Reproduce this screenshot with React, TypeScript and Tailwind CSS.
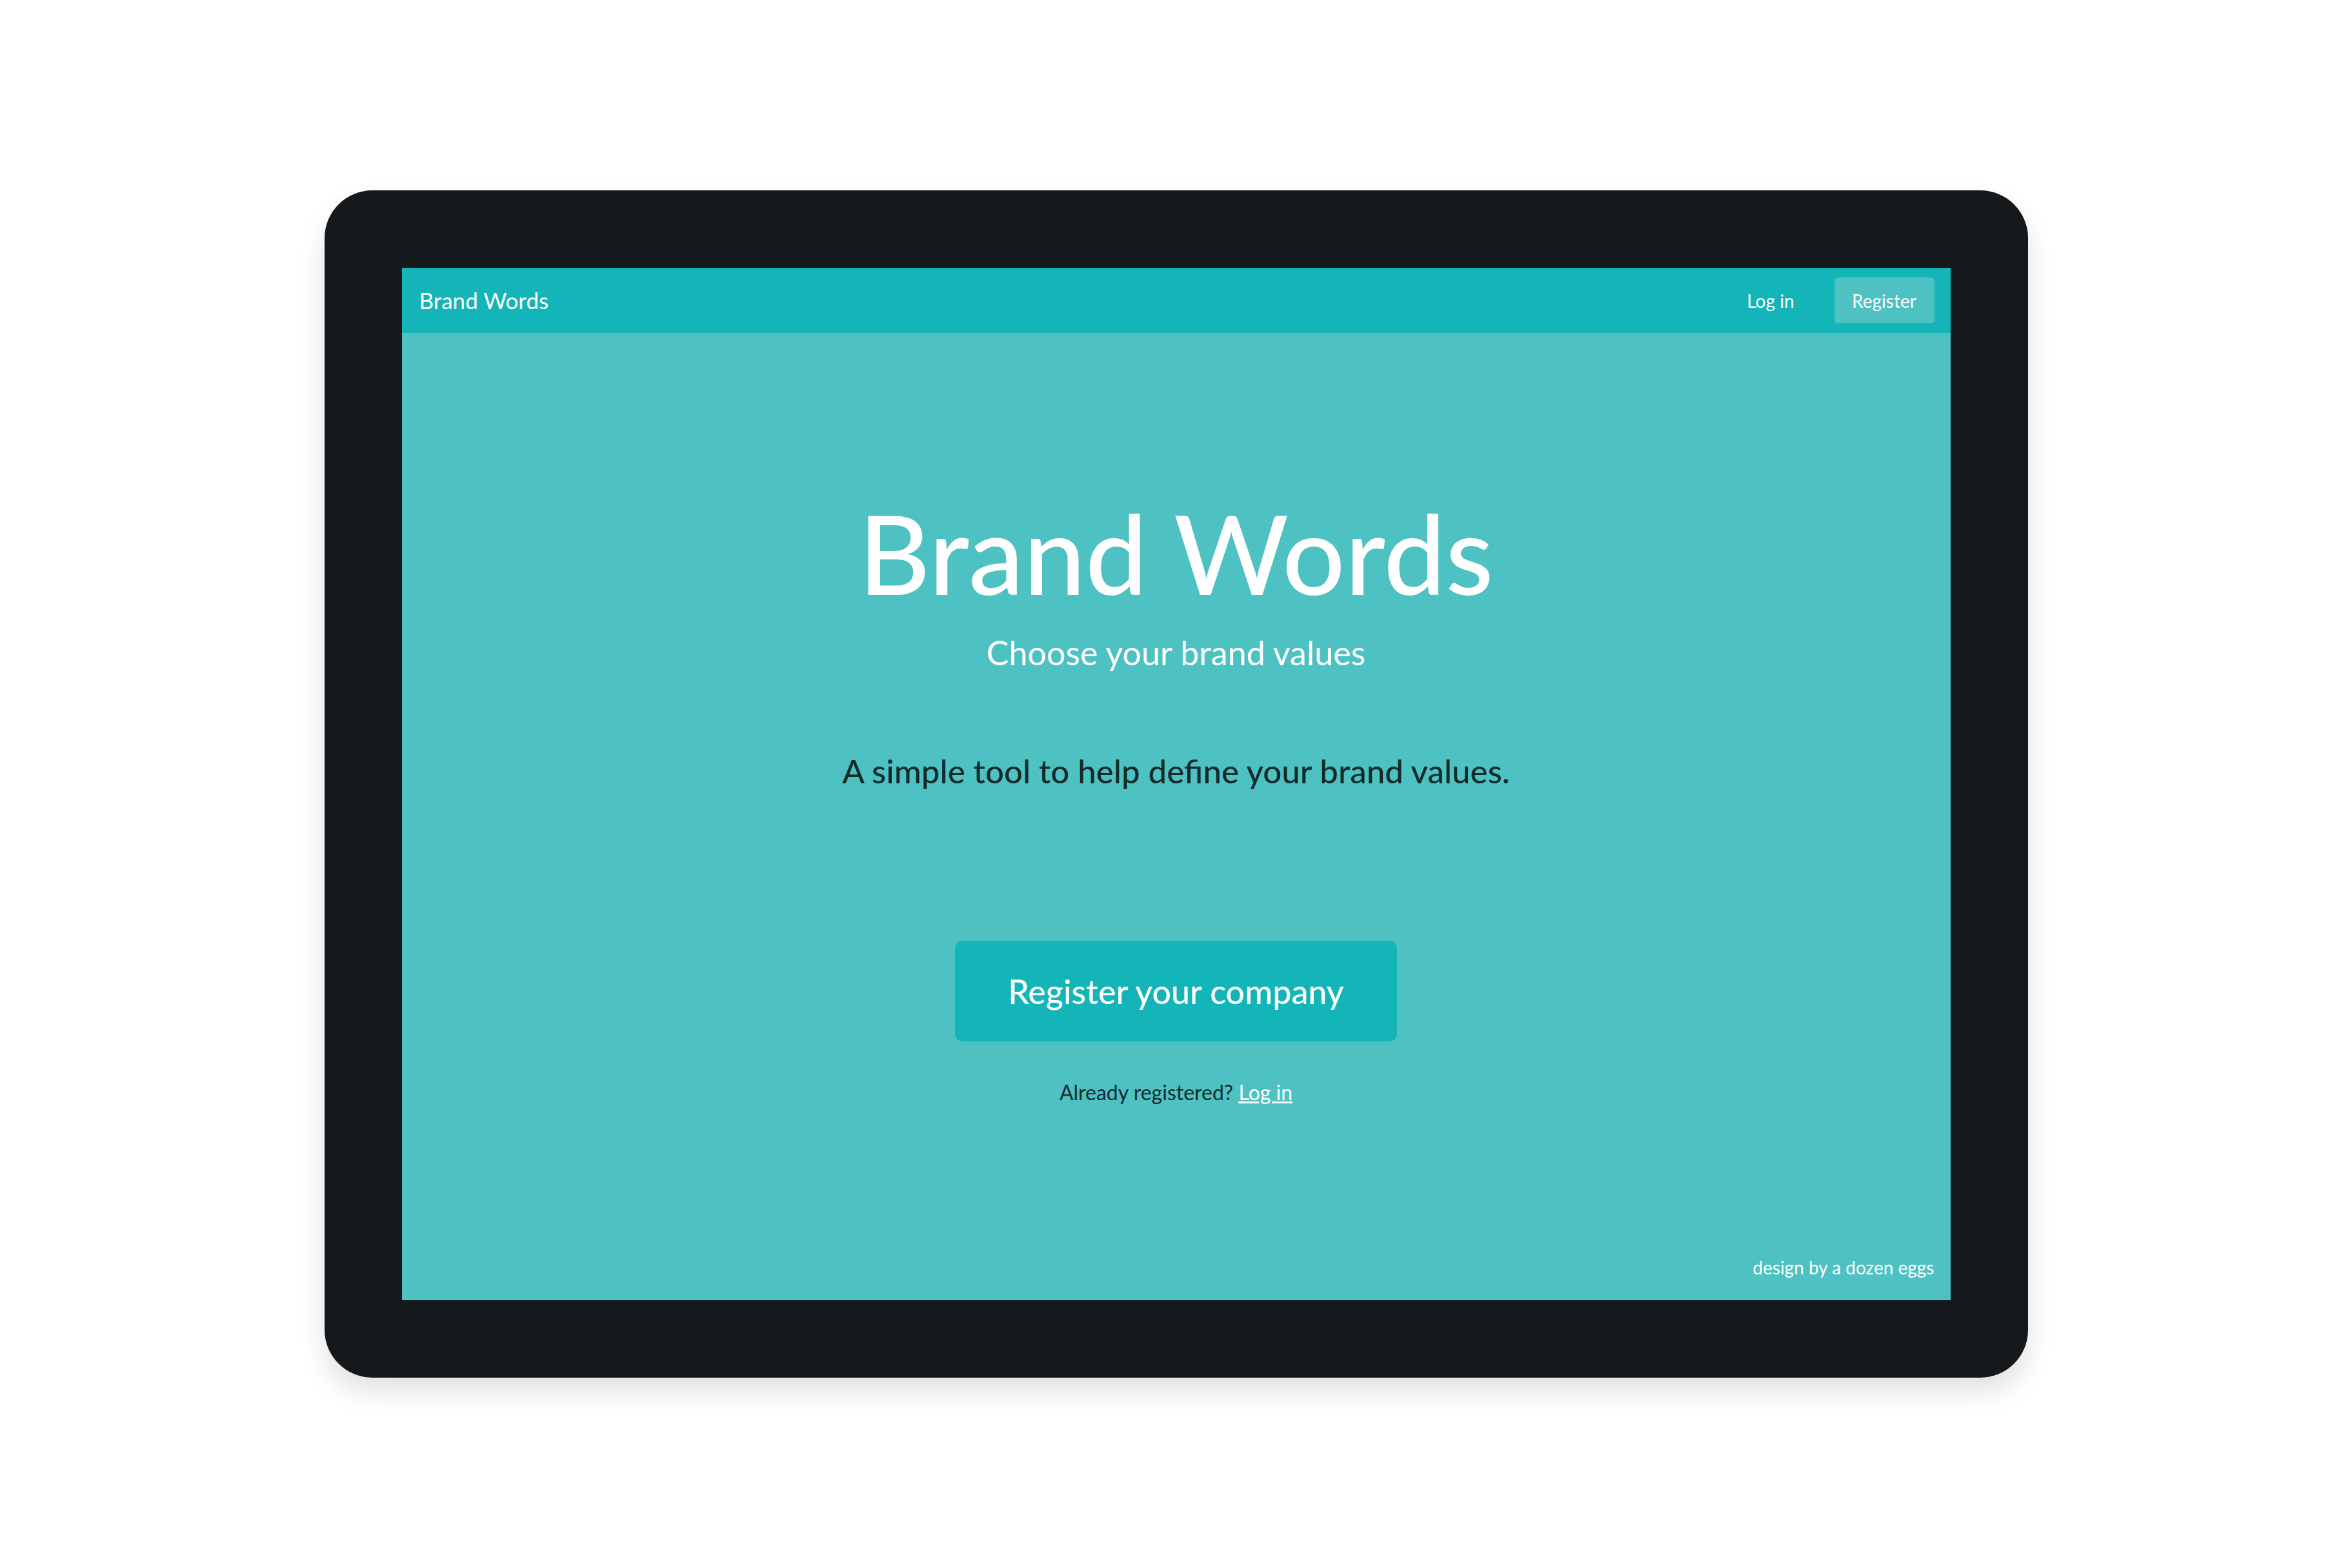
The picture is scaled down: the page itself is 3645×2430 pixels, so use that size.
import React from 'react';

const font = { fontFamily: 'Lato, "Noto Sans", sans-serif' };

const NavBar = () => (
  <header className="flex h-[101px] shrink-0 items-center justify-between bg-[#13b5b8] pl-[27px] pr-[25px]">
    <span className="text-[35px] text-white">Brand Words</span>
    <nav className="flex items-center gap-[62px]">
      <a className="text-[28px] text-white">Log in</a>
      <a className="flex h-[71px] w-[155px] items-center justify-center rounded-[6px] bg-[#4ec1c2] text-[28px] text-white">
        Register
      </a>
    </nav>
  </header>
);

const Hero = () => (
  <main className="relative flex flex-1 flex-col items-center bg-[#4ec1c2] pt-[254px]">
    <h1 className="text-[171px] font-medium leading-none text-white">Brand Words</h1>
    <p className="mt-[44px] text-[52px] leading-none text-white">Choose your brand values</p>
    <p className="mt-[132px] text-[51px] font-medium leading-none text-[#132a2b]">
      A simple tool to help define your brand values.
    </p>
    <button className="mt-[238px] flex h-[156px] w-[685px] items-center justify-center rounded-[12px] bg-[#13b5b8] text-[52px] font-medium text-white">
      Register your company
    </button>
    <p className="mt-[63px] text-[32px] leading-none text-[#132a2b]">
      Already registered? <a className="text-white underline">Log in</a>
    </p>
    <span className="absolute bottom-[30px] right-[25px] text-[28px] text-white">
      design by a dozen eggs
    </span>
  </main>
);

export default function App() {
  return (
    <div className="flex h-[2430px] w-[3645px] items-center justify-center bg-white" style={font}>
      <div className="rounded-[74px] bg-[#15191c] p-[120px] shadow-[0_22px_40px_rgba(0,0,0,0.12)]">
        <div className="flex h-[1600px] w-[2400px] flex-col">
          <NavBar />
          <Hero />
        </div>
      </div>
    </div>
  );
}
